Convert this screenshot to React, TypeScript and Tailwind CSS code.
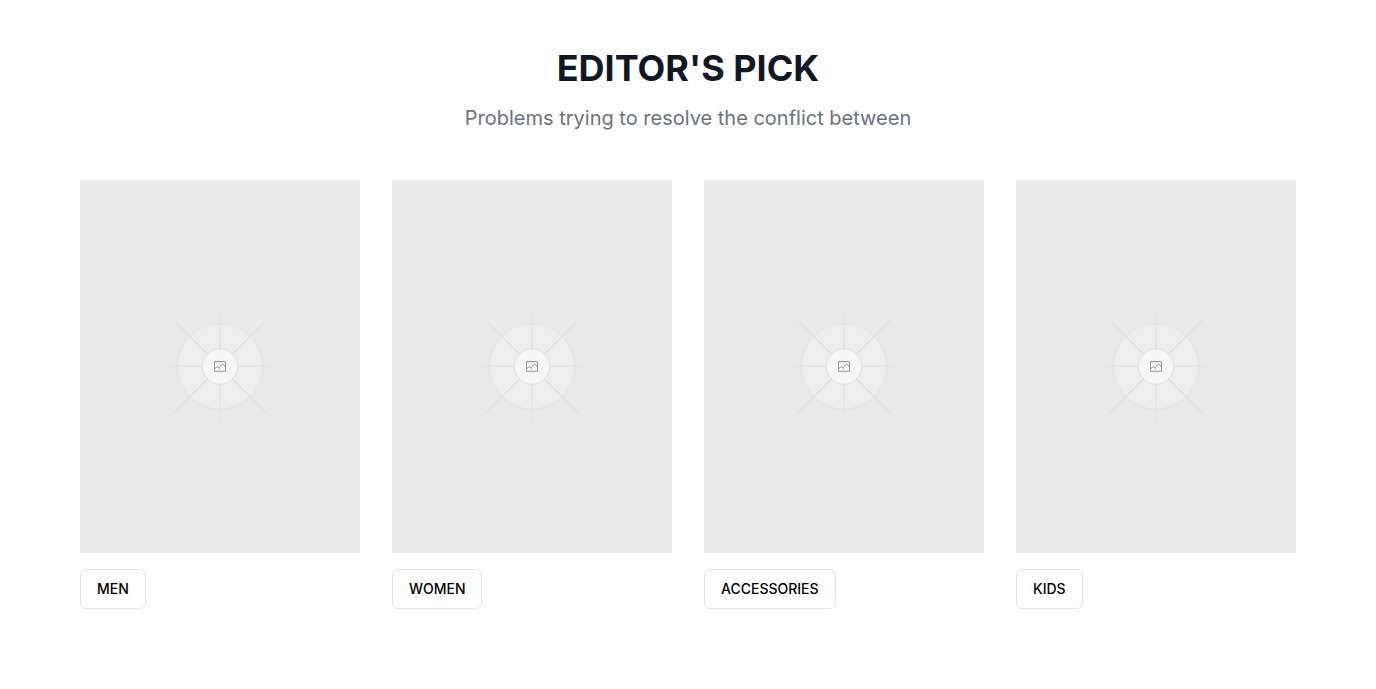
const categories = ["MEN", "WOMEN", "ACCESSORIES", "KIDS"];

function Placeholder({ label, id }: { label: string; id: string }) {
  return (
    <div className="flex h-[373px] items-center justify-center bg-[#eaeaea]">
      <svg
        role="img"
        aria-label={label}
        className="size-40"
        viewBox="-80 -80 160 160"
        fill="none"
      >
        <defs>
          <radialGradient id={id} gradientUnits="userSpaceOnUse" cx="0" cy="0" r="82">
            <stop offset="0.4" stopColor="#e0e0e0" />
            <stop offset="0.7" stopColor="#e1e1e1" />
            <stop offset="1" stopColor="#e2e2e2" stopOpacity="0" />
          </radialGradient>
          <radialGradient id={`${id}-axis`} gradientUnits="userSpaceOnUse" cx="0" cy="0" r="60">
            <stop offset="0.55" stopColor="#dfdfdf" />
            <stop offset="1" stopColor="#e0e0e0" stopOpacity="0" />
          </radialGradient>
        </defs>
        <g transform="translate(0 -0.500)">
          <circle r="42.7" fill="#eeeeee" stroke="#e4e4e4" />
          <path d="M-60-.4H60M-.2-60V60" stroke={`url(#${id}-axis)`} strokeWidth="1.2" />
          <path d="M-56-56L56 56M-56 56L56-56" stroke={`url(#${id})`} strokeWidth="1.2" />
          <circle r="17.7" fill="#f5f5f5" stroke="#e1e1e1" />
          <path
            d="M-5.500-5H5.500V4.800H-5.500ZM-5.500 2.500L-2.800 0L0 2.200M-.8 1L2.500-2.500L5.500 .2"
            stroke="#969696"
            strokeWidth="1"
          />
        </g>
      </svg>
    </div>
  );
}

export default function App() {
  return (
    <section className="bg-white px-20 py-12 font-['Inter',sans-serif]">
      <header className="mb-12 text-center">
        <h2 className="mb-4 text-4xl font-bold text-gray-900">EDITOR'S PICK</h2>
        <p className="text-xl text-gray-500">Problems trying to resolve the conflict between</p>
      </header>
      <div className="grid grid-cols-4 gap-8">
        {categories.map((name) => (
          <article key={name}>
            <Placeholder label={name} id={`ray-${name}`} />
            <button
              type="button"
              className="mt-4 h-10 rounded-md border border-[#e5e5e5] bg-white px-4 text-sm font-medium text-black"
            >
              {name}
            </button>
          </article>
        ))}
      </div>
    </section>
  );
}
